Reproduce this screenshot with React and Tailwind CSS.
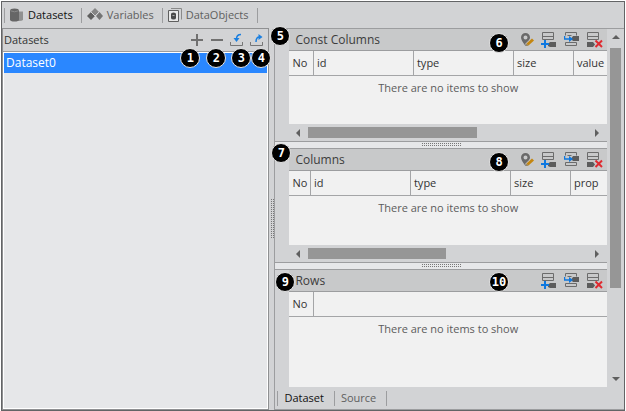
import { useState } from "react";
import clsx from "clsx";

const CONST_COLUMNS = [
  { label: "No", width: "w-[24px]" },
  { label: "id", width: "w-[100px]" },
  { label: "type", width: "w-[100px]" },
  { label: "size", width: "w-[60px]" },
  { label: "value", width: "" },
];

const COLUMNS = [
  { label: "No", width: "w-[21px]" },
  { label: "id", width: "w-[100px]" },
  { label: "type", width: "w-[100px]" },
  { label: "size", width: "w-[60px]" },
  { label: "prop", width: "" },
];

const ROWS = [
  { label: "No", width: "w-[24px]" },
  { label: "", width: "" },
];

function Svg({ size = 16, children }) {
  return (
    <svg width={size} height={size} viewBox={`0 0 ${size} ${size}`} fill="none" className="block shrink-0" aria-hidden="true">
      {children}
    </svg>
  );
}

function DatabaseIcon() {
  return (
    <Svg size={14}>
      <path d="M7 3.5h6v8.5q-1 1-4 1h-2z" fill="#919191" />
      <path d="M0 2.5Q0 .5 4.5 .5T9 2.5v9Q9 13.5 4.5 13.5T0 11.5z" fill="#666" />
      <path d="M.5 2.8Q4.5 4.8 8.5 2.8" stroke="#8a8a8a" />
    </Svg>
  );
}

function VariablesIcon() {
  return (
    <Svg size={16}>
      <path d="M8 1l4 4-4 4-4-4z" fill="#858585" />
      <path d="M4 5l4 4-4 4-4-4z" fill="#5f5f5f" />
      <path d="M12.5 5l3.5 4-3.5 4L9 9z" fill="#747474" />
      <path d="M4 5l4 4 4-4M8 9l1 1" stroke="#d2d3d5" />
    </Svg>
  );
}

function DataObjectsIcon() {
  return (
    <Svg size={14}>
      <path d="M3 .5h10.500v11" stroke="#8a8a8a" />
      <path d="M.5 2.500h10v11h-10z" fill="#e9e9e9" stroke="#5f5f5f" />
      <path d="M3 6q0-1.500 2.500-1.500T8 6v4q0 1.500-2.500 1.500T3 10z" fill="#4a4a4a" />
      <path d="M4.500 7.500h2" stroke="#aaa" />
    </Svg>
  );
}

function ImportIcon() {
  return (
    <Svg size={14}>
      <path d="M.5 9v3.500h12V9" stroke="#777" />
      <path d="M11 1.500Q6.500 1.500 6.500 6" stroke="#1a7fe0" strokeWidth="1.500" />
      <path d="M3.500 5h6l-3 4z" fill="#1a7fe0" />
    </Svg>
  );
}

function ExportIcon() {
  return (
    <Svg size={14}>
      <path d="M.5 9v3.500h12V9" stroke="#777" />
      <path d="M6 9Q6 4 9.500 4" stroke="#1a7fe0" strokeWidth="1.500" />
      <path d="M8.500 1l4 3-4 3z" fill="#1a7fe0" />
    </Svg>
  );
}

function PinIcon() {
  return (
    <Svg>
      <path d="M7.500 1A4.500 4.500 0 0 0 3 5.500Q3 8 7.500 14 12 8 12 5.500A4.500 4.500 0 0 0 7.500 1zM7.500 3.500a2 2 0 1 1 0 4 2 2 0 0 1 0-4z" fill="#6a6a6a" fillRule="evenodd" />
      <path d="M8.500 13.500l6-6" stroke="#c8c9ca" strokeWidth="4" />
      <path d="M9.500 12.500l5.500-5" stroke="#c4860f" strokeWidth="3" />
      <path d="M8 14l.5-2.500 2 2z" fill="#8f7440" />
    </Svg>
  );
}

function AddIcon() {
  return (
    <Svg>
      <path d="M1.500 .5h11v7h-11zM1.500 4.500h11" stroke="#6c6c6c" />
      <path d="M7 12l2-2h6v5H9l-2-1z" fill="#5c5c5c" />
      <path d="M3 8h2v3h3v2H5v3H3v-3H0v-2h3z" fill="#0e78e0" />
    </Svg>
  );
}

function InsertIcon() {
  return (
    <Svg>
      <path d="M1.500 3.500v-3h11v3M1.500 10.500h11v3h-11zM3.500 3.500h4" stroke="#6c6c6c" />
      <path d="M7 7l2-3h6v5H9z" fill="#5c5c5c" />
      <path d="M.5 4v3H6" stroke="#0e78e0" strokeWidth="1.500" />
      <path d="M5 4l4 3-4 3z" fill="#0e78e0" />
    </Svg>
  );
}

function DeleteIcon() {
  return (
    <Svg>
      <path d="M.5 .5h11v7H.5zM.5 4.500h11" stroke="#6c6c6c" />
      <path d="M0 10h6l2 2.500L6 15H0z" fill="#5c5c5c" />
      <path d="M8.500 8.500l6.500 6.500M15 8.500l-6.500 6.500" stroke="#e02a30" strokeWidth="2" />
    </Svg>
  );
}

function IconButton({ label, children }) {
  return (
    <button type="button" aria-label={label} className="flex items-center justify-center">
      {children}
    </button>
  );
}

// Numbered callout pinned over the panel it belongs to
function Callout({ n, className }) {
  return (
    <span
      className={clsx(
        "absolute z-10 flex size-[20px] items-center justify-center rounded-full border border-[#e4e4e4] bg-black font-['DejaVu_Sans_Mono',monospace] text-[12px] leading-none font-bold text-white",
        className,
      )}
    >
      {n}
    </span>
  );
}

function Divider() {
  return <span className="h-[15px] w-px shrink-0 bg-[#9c9d9f]" />;
}

function Tab({ active, icon, label, onClick, className }) {
  return (
    <button
      type="button"
      role="tab"
      aria-selected={active}
      onClick={onClick}
      className={clsx("flex items-center gap-1 whitespace-nowrap", active ? "font-medium text-[#111]" : "text-[#606060]", className)}
    >
      {icon}
      {label}
    </button>
  );
}

function Grip({ vertical }) {
  return (
    <span
      className={clsx(
        "bg-[conic-gradient(#777_25%,transparent_0)] bg-[length:2px_2px]",
        vertical ? "h-10 w-1" : "h-1 w-10",
      )}
    />
  );
}

function Splitter() {
  return (
    <div className="flex h-2 items-center justify-center border-y border-[#9c9d9f] bg-[#e6e7e9]">
      <Grip />
    </div>
  );
}

function HorizontalScrollbar({ thumb }) {
  return (
    <div className="flex h-[17px] items-center pr-1 pl-1.5">
      <button type="button" aria-label="Scroll left" className="flex w-[13px]">
        <Svg size={8}>
          <path d="M5 0v8L1 4z" fill="#5f5f5f" />
        </Svg>
      </button>
      <div className="flex h-[11px] flex-1">
        <div className={clsx("bg-[#969696]", thumb)} />
      </div>
      <button type="button" aria-label="Scroll right" className="flex w-[9px]">
        <Svg size={8}>
          <path d="M1 0v8l4-4z" fill="#5f5f5f" />
        </Svg>
      </button>
    </div>
  );
}

function Section({ title, columns, bodyHeight, pin, thumb, callouts }) {
  return (
    <section className="relative pl-3.5">
      <header className="flex h-[22px] items-center justify-between border-b border-[#9c9d9f] bg-[#c8c9ca] pr-1 pl-1.5">
        <h2 className="text-[12px] text-[#3c3c3c]">{title}</h2>
        <div className="flex gap-[7px]">
          {pin && <IconButton label="Edit position"><PinIcon /></IconButton>}
          <IconButton label="Add"><AddIcon /></IconButton>
          <IconButton label="Insert"><InsertIcon /></IconButton>
          <IconButton label="Delete"><DeleteIcon /></IconButton>
        </div>
      </header>
      <table className="w-full table-fixed border-collapse bg-[#f1f1f1]">
        <thead>
          <tr className="h-[24px] border-b border-[#a4a5a7]">
            {columns.map((column, i) => (
              <th
                key={column.label}
                className={clsx(
                  "overflow-hidden p-0 pl-[3px] text-left font-normal whitespace-nowrap text-[#333]",
                  column.width,
                  i < columns.length - 1 && "border-r border-[#a4a5a7]",
                )}
              >
                {column.label}
              </th>
            ))}
          </tr>
        </thead>
        <tbody>
          <tr className={bodyHeight}>
            <td colSpan={columns.length} className="p-0 pt-1 text-center align-top text-[#5c5c5c]">
              There are no items to show
            </td>
          </tr>
        </tbody>
      </table>
      {thumb && <HorizontalScrollbar thumb={thumb} />}
      {callouts}
    </section>
  );
}

function DatasetList() {
  return (
    <aside className="flex w-[43%] shrink-0 flex-col border border-[#8f9092]">
      <header className="relative flex h-[23px] items-center justify-between border-b border-[#9c9d9f] pr-1 pl-px">
        <h2 className="text-[#333]">Datasets</h2>
        <div className="flex gap-1.5">
          <IconButton label="Add dataset">
            <Svg size={14}>
              <path d="M7 1v12M1 7h12" stroke="#707070" strokeWidth="2" />
            </Svg>
          </IconButton>
          <IconButton label="Remove dataset">
            <Svg size={14}>
              <path d="M1 7h12" stroke="#707070" strokeWidth="2" />
            </Svg>
          </IconButton>
          <IconButton label="Import"><ImportIcon /></IconButton>
          <IconButton label="Export"><ExportIcon /></IconButton>
        </div>
        <Callout n={1} className="top-[19px] right-[68px]" />
        <Callout n={2} className="top-[19px] right-[42px]" />
        <Callout n={3} className="top-[19px] right-[17px]" />
        <Callout n={4} className="top-[19px] -right-[3px]" />
      </header>
      <ul className="flex-1 border border-white bg-[#e6e7e9]">
        <li>
          <button type="button" className="flex h-5 w-full items-center bg-[#2a87ff] pl-0.5 text-[12px] text-white">
            Dataset0
          </button>
        </li>
      </ul>
    </aside>
  );
}

function DatasetDetail() {
  const [view, setView] = useState("Dataset");

  return (
    <div className="flex min-w-0 flex-1 flex-col border-y border-l border-[#9c9d9f]">
      <div className="flex">
        <div className="min-w-0 flex-1">
          <Section
            title="Const Columns"
            columns={CONST_COLUMNS}
            bodyHeight="h-[49px]"
            pin
            thumb="w-[59%]"
            callouts={
              <>
                <Callout n={5} className="-top-[3px] -left-[5px]" />
                <Callout n={6} className="top-1 right-[98px]" />
              </>
            }
          />
          <Splitter />
          <Section
            title="Columns"
            columns={COLUMNS}
            bodyHeight="h-[50px]"
            pin
            thumb="w-[48%]"
            callouts={
              <>
                <Callout n={7} className="-top-[6px] -left-[4px]" />
                <Callout n={8} className="top-[3px] right-[98px]" />
              </>
            }
          />
          <Splitter />
          <Section
            title="Rows"
            columns={ROWS}
            bodyHeight="h-[71px]"
            callouts={
              <>
                <Callout n={9} className="top-[2px] left-0" />
                <Callout n={10} className="top-[2px] right-[98px]" />
              </>
            }
          />
        </div>
        <div className="flex w-[17px] flex-col items-center justify-between pt-1 pb-1">
          <button type="button" aria-label="Scroll up">
            <Svg size={8}>
              <path d="M0 6h8L4 2z" fill="#5f5f5f" />
            </Svg>
          </button>
          <div className="flex w-[11px] flex-1 flex-col py-[7px]">
            <div className="h-3/4 bg-[#969696]" />
          </div>
          <button type="button" aria-label="Scroll down">
            <Svg size={8}>
              <path d="M0 2h8L4 6z" fill="#5f5f5f" />
            </Svg>
          </button>
        </div>
      </div>
      <div role="tablist" className="flex h-[22px] items-center pl-0.5">
        <Divider />
        <Tab label="Dataset" active={view === "Dataset"} onClick={() => setView("Dataset")} className="pr-2.5 pl-1.5" />
        <Divider />
        <Tab label="Source" active={view === "Source"} onClick={() => setView("Source")} className="pr-2.5 pl-1.5" />
        <Divider />
      </div>
    </div>
  );
}

export default function App() {
  const [tab, setTab] = useState("Datasets");

  return (
    <div className="bg-white p-px font-['Open_Sans',sans-serif] text-[11px] leading-4">
      <main className="border border-[#636466] bg-[#d2d3d5]">
        <div role="tablist" className="flex h-[26px] items-center pl-0.5">
          <Divider />
          <Tab label="Datasets" icon={<DatabaseIcon />} active={tab === "Datasets"} onClick={() => setTab("Datasets")} className="pr-2 pl-[5px]" />
          <Divider />
          <Tab label="Variables" icon={<VariablesIcon />} active={tab === "Variables"} onClick={() => setTab("Variables")} className="pr-2 pl-[5px]" />
          <Divider />
          <Tab label="DataObjects" icon={<DataObjectsIcon />} active={tab === "DataObjects"} onClick={() => setTab("DataObjects")} className="pr-2 pl-[5px]" />
          <Divider />
        </div>
        <div className="flex">
          <DatasetList />
          <div className="flex w-[5px] shrink-0 items-center justify-center">
            <Grip vertical />
          </div>
          <DatasetDetail />
        </div>
      </main>
    </div>
  );
}
